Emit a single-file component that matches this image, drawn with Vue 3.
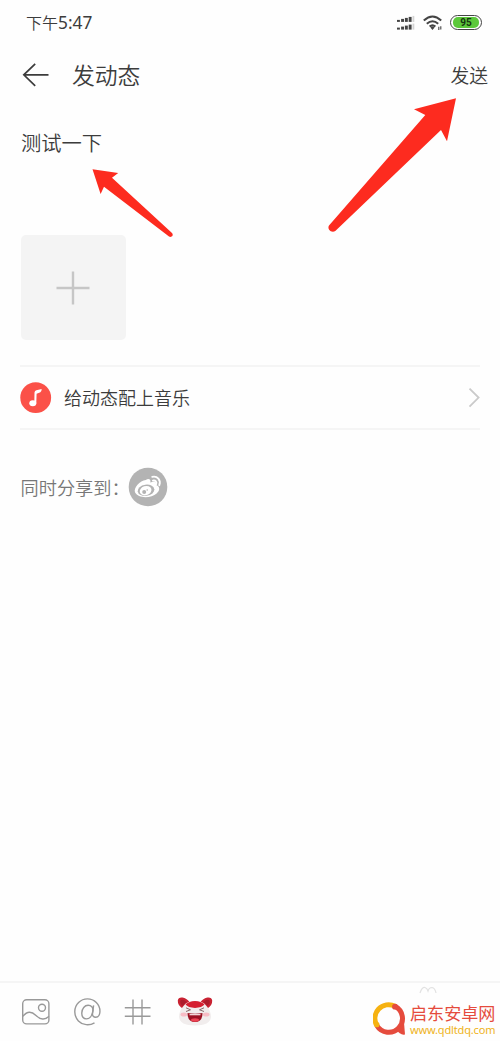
<script setup>
const bars = [2, 3, 4, 5, 6]
</script>

<template>
  <div class="screen">
    <div class="status">
      <span class="time">下午<span class="digits">5:47</span></span>
      <div class="indicators">
        <svg class="signal" width="20" height="16" viewBox="0 0 20 16">
          <g v-for="row in 2" :key="row">
            <rect
              v-for="(h, i) in bars"
              :key="i"
              :x="i * 3.8 + (i === 0 ? 0 : 0.3)"
              :y="row * 7.7 - 0.8 - h"
              :width="i === 4 ? 1.8 : 2.9"
              :height="h"
              :fill="i === 4 ? '#d4d4d4' : '#444'"
            />
          </g>
        </svg>
        <svg class="wifi" width="20" height="16" viewBox="0 0 20 16" fill="none" stroke="#444" stroke-width="2">
          <path d="M.8 5.600Q9.500-2.500 18.200 5.600M3.800 8.800Q9.500 3.600 15.200 8.800M6.600 11.600Q9.500 9.100 12.400 11.600" />
          <path d="M7.400 12.400L9.500 14.900L11.600 12.400Q9.500 10.800 7.400 12.400Z" fill="#444" stroke="none" />
          <path d="M15.800 15V11.800M17.800 11.300V14.500" stroke-width="1.100" />
        </svg>
        <div class="battery"><span>95</span></div>
      </div>
    </div>

    <header class="header">
      <svg class="back" width="28" height="26" viewBox="0 0 28 26" fill="none" stroke="#3c3c3c" stroke-width="1.700">
        <path d="M13.200 1.800L1.800 12.800L13.200 23.800M1.800 12.800H26.500" />
      </svg>
      <h1>发动态</h1>
      <span class="send">发送</span>
    </header>

    <main>
      <p class="content">测试一下</p>
      <div class="add">
        <svg width="34" height="34" viewBox="0 0 34 34" stroke="#c6c6c6" stroke-width="2.400">
          <path d="M17 .5V33.500M.5 17H33.500" />
        </svg>
      </div>
      <div class="music">
        <svg width="32" height="32" viewBox="0 0 32 32">
          <circle cx="15.700" cy="15.700" r="15.400" fill="#fb5148" />
          <ellipse cx="12.800" cy="21.200" rx="3.500" ry="3" fill="#fff" />
          <path d="M14.300 21.200L14.500 10.500Q14.700 8.700 16.400 8.300L21.600 7Q21.900 9.800 19.200 10.800L16.600 11.700L16.300 21.200Z" fill="#fff" />
        </svg>
        <span>给动态配上音乐</span>
        <svg class="chevron" width="12" height="20" viewBox="0 0 12 20" fill="none" stroke="#cacaca" stroke-width="1.800">
          <path d="M1.500 .6L10.600 9.600L1.500 18.600" />
        </svg>
      </div>
      <div class="share">
        <span>同时分享到：</span>
        <svg width="40" height="40" viewBox="0 0 40 40">
          <circle cx="20" cy="20" r="19.300" fill="#b3b3b3" />
          <path d="M17.800 13C20.300 10.900 23.300 11.900 22.300 15.400C25.800 13.800 29.300 14.800 28.200 18C32.300 19.600 32 23.500 28.600 26.500C23.500 31.400 10.300 31.800 7.100 25.600C5.100 21.300 12 13.300 17.800 13Z" fill="#fff" />
          <ellipse cx="18" cy="23.300" rx="8.400" ry="5.600" fill="#b3b3b3" transform="rotate(-8 18 23.300)" />
          <ellipse cx="17.600" cy="23.700" rx="6" ry="4.600" fill="#fff" transform="rotate(-18 17.600 23.700)" />
          <circle cx="16.200" cy="24.900" r="2" fill="#b3b3b3" />
          <circle cx="19.200" cy="23" r=".8" fill="#b3b3b3" />
          <path d="M24.200 9.900C29.300 8.700 33.200 13 31.300 18.200M24.900 13.600C27.500 13 29 15 28.100 17.200" fill="none" stroke="#fff" stroke-width="1.900" stroke-linecap="round" />
        </svg>
      </div>
    </main>

    <footer class="toolbar">
      <svg width="28" height="26" viewBox="0 0 28 26" fill="none" stroke="#999" stroke-width="1.400">
        <rect x=".7" y=".7" width="26.200" height="24.200" rx="4" />
        <circle cx="20" cy="8.700" r="3.500" />
        <path d="M.8 17.300C5.500 11.800 9.500 12.200 14 16.500C18.500 20.800 23 21.300 26.900 17.200" />
      </svg>
      <svg class="mention" width="27" height="28" viewBox="0 0 27 28" fill="none" stroke="#999" stroke-width="1.400">
        <path d="M20.500 24.800C15.400 27.900 8.600 27.300 4.400 22.900C-.6 17.500-.3 9.300 4.600 4.500C9.500-.4 17.400-.3 22.300 4.400C25.400 7.500 26.300 11.300 25.800 15C25.400 17.600 23.700 19.200 21.700 19.200C19.600 19.200 18.200 17.800 18.500 15.800L19.600 7.300" />
        <path d="M18.900 12.700C18.300 17.900 15.500 20.900 12.400 20.900C9.400 20.900 7.600 18.400 7.800 14.900C8 10.500 10.600 7.300 14.100 7.300C17.300 7.300 19.300 9.500 18.900 12.700Z" />
      </svg>
      <svg width="28" height="26" viewBox="0 0 28 26" stroke="#999" stroke-width="1.400">
        <path d="M9 .5V25.500M18 .5V25.500M.8 8.700H26.500M.8 17.200H26.500" />
      </svg>
      <svg class="mascot" width="36" height="32" viewBox="0 0 36 32">
        <path d="M6.500 13Q.5 10 .8 4.500Q1.300 1 5.500 1.500Q9.500 2 12.500 6ZM29.500 13Q35.500 10 35.200 4.500Q34.700 1 30.500 1.500Q26.500 2 23.500 6Z" fill="#c92232" />
        <path d="M5.500 10Q2.500 7 3.500 4.500Q6 2.500 9.500 6ZM30.500 10Q33.500 7 32.500 4.500Q30 2.500 26.500 6Z" fill="#ab1c2b" />
        <path d="M6.500 10Q10 5 18 5Q26 5 29.500 10Q34 15 34 21Q33 29.500 18 29.500Q3 29.500 2 21Q2 15 6.500 10Z" fill="#f1eded" />
        <path d="M8.500 8.500Q12 5 18 5Q24 5 27.500 8.500Q25 11.500 18 12Q11 11.500 8.500 8.500Z" fill="#d51f31" />
        <path d="M9 11.800L13.500 13.800L9 15.500M27 11.800L22.500 13.800L27 15.500" fill="none" stroke="#7d5c5f" stroke-width=".9" />
        <ellipse cx="6.800" cy="18.500" rx="3.300" ry="2" fill="#f8bdc6" />
        <ellipse cx="29.200" cy="18.500" rx="3.300" ry="2" fill="#f8bdc6" />
        <path d="M10.500 17Q18 18.500 25.500 17Q25.500 26 18 26Q10.500 26 10.500 17Z" fill="#9c1223" />
        <path d="M12.500 18H23.500V19.300H12.500Z" fill="#f2d5d8" />
        <ellipse cx="18" cy="24" rx="4" ry="1.700" fill="#ed4354" />
      </svg>
    </footer>

    <svg class="faint" width="18" height="8" viewBox="0 0 18 8" fill="none" stroke="#e2e2e2" stroke-width="1.200">
      <path d="M1 7Q3 1 6 1.500Q8 2 9 5Q10 1.500 13 1.500Q16 2 17 7" />
    </svg>
    <div class="brand">
      <svg width="34" height="35" viewBox="0 0 34 35" fill="none" stroke-width="5">
        <path d="M3.800 23.500A13.800 13.800 0 0 1 22 4.200" stroke="#f6b211" />
        <path d="M22 4.200A13.800 13.800 0 1 1 3.800 23.500" stroke="#e54b3d" />
        <path d="M23.500 27.500L31 20.500L32 32.500Q27 33.500 23.500 27.500Z" fill="#e54b3d" stroke="none" />
        <circle cx="22" cy="4.700" r="2.900" fill="#e54b3d" stroke="none" />
        <circle cx="3.900" cy="22.700" r="2.600" fill="#f6b211" stroke="none" />
      </svg>
      <div class="brand-text">
        <span class="brand-name">启东安卓网</span>
        <span class="brand-url">www.qdltdq.com</span>
      </div>
    </div>

    <svg class="arrows" width="500" height="250" viewBox="0 0 500 250" fill="#fd2b1f">
      <path d="M456 98.300L414 109.300L425.300 115L329 225.500C326.800 229 331.500 233.500 335.300 231L441 130L447 141.200Z" />
      <path d="M92.500 169.200L118.200 173L112 177.700L172 233C174 235.500 171.500 237.700 169 236.600L104 186.700L100.600 194Z" />
    </svg>
  </div>
</template>

<style>
body { margin: 0; background: #fff; }
</style>

<style scoped>
.screen {
  position: relative;
  box-sizing: border-box;
  width: 500px;
  height: 1041px;
  overflow: hidden;
  display: flex;
  flex-direction: column;
  background: #fefefe;
  color: #3c3c3c;
  font-family: "Noto Sans CJK SC", sans-serif;
  font-weight: 350;
}
svg { display: block; flex: none; }
.status { display: flex; justify-content: space-between; height: 45px; padding: 0 18px 0 26px; align-items: center; }
.time { font-size: 16px; line-height: 24px; }
.digits { font-family: "Noto Sans", sans-serif; font-size: 17.300px; font-weight: 400; }
.indicators { display: flex; align-items: center; gap: 7px; }
.signal { margin-right: -1px; }
.battery {
  box-sizing: border-box;
  width: 32px;
  height: 15px;
  padding: 1px;
  border: 1.500px solid #444;
  border-radius: 8px;
  margin-top: -1px;
}
.battery span {
  display: block;
  height: 11px;
  margin: 0 1px;
  border-radius: 5px;
  background: #5cc83b;
  color: #173510;
  font: bold 10px/11px Roboto, sans-serif;
  text-align: center;
}
.header { display: flex; align-items: center; height: 59px; padding: 0 12px 0 22px; }
h1 { flex: 1; margin: 0 0 0 22px; font-size: 22.800px; font-weight: 350; line-height: 32px; }
.send { font-size: 18.800px; line-height: 28px; }
main { flex: 1; padding: 0 20px; }
.content { height: 131px; margin: 0; padding: 23px 0 0 1px; box-sizing: border-box; font-size: 20.300px; line-height: 30px; }
.add { width: 105px; height: 105px; margin-left: .5px; display: grid; place-items: center; border-radius: 5px; background: #f4f4f4; }
.music {
  box-sizing: border-box;
  display: flex;
  align-items: center;
  height: 65px;
  margin-top: 25px;
  border-top: 2px solid #f5f5f5;
  border-bottom: 2px solid #f5f5f5;
  font-size: 18px;
}
.music span { flex: 1; margin: -1px 0 0 12px; }
.share { display: flex; align-items: center; height: 40px; margin-top: 37px; color: #777; font-size: 18.200px; }
.share span { width: 108px; padding-left: .5px; box-sizing: border-box; white-space: nowrap; }
.toolbar {
  box-sizing: border-box;
  display: flex;
  align-items: center;
  height: 60px;
  padding: 0 22px;
  border-top: 2px solid #f5f5f5;
  gap: 23.500px;
}
.mascot { margin-left: 1.500px; }
.faint { position: absolute; left: 419px; top: 986px; }
.brand { position: absolute; left: 373px; top: 1002px; display: flex; align-items: center; gap: 3px; }
.brand-text { display: flex; flex-direction: column; }
.brand-name { color: #e54b3d; font-size: 17.100px; line-height: 20px; font-weight: 400; }
.brand-url { color: #efb31b; font: 11px/13px "Noto Sans", sans-serif; letter-spacing: -.15px; }
.arrows { position: absolute; left: 0; top: 0; pointer-events: none; }
</style>
